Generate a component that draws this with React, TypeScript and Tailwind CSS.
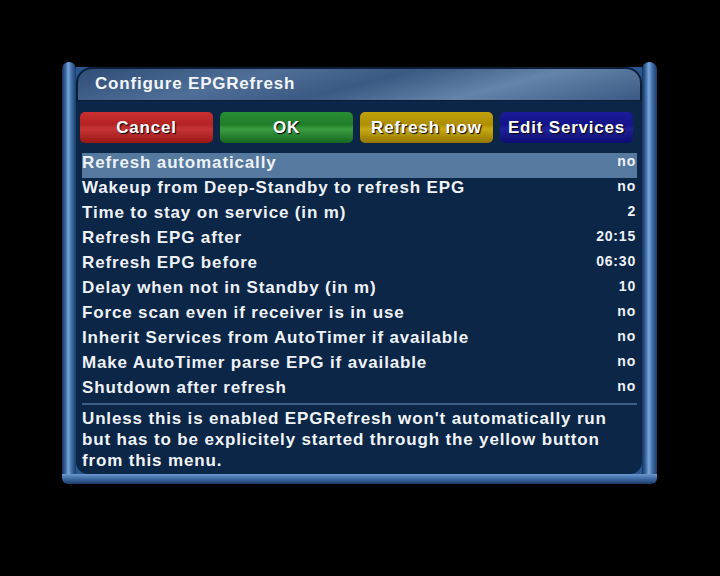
import React from 'react';

const settings = [
  { label: 'Refresh automatically', value: 'no' },
  { label: 'Wakeup from Deep-Standby to refresh EPG', value: 'no' },
  { label: 'Time to stay on service (in m)', value: '2' },
  { label: 'Refresh EPG after', value: '20:15' },
  { label: 'Refresh EPG before', value: '06:30' },
  { label: 'Delay when not in Standby (in m)', value: '10' },
  { label: 'Force scan even if receiver is in use', value: 'no' },
  { label: 'Inherit Services from AutoTimer if available', value: 'no' },
  { label: 'Make AutoTimer parse EPG if available', value: 'no' },
  { label: 'Shutdown after refresh', value: 'no' },
];

const buttons = [
  { label: 'Cancel', cls: 'bg-[linear-gradient(180deg,#c83030_0%,#b52222_40%,#c53535_55%,#9a1414_100%)]' },
  { label: 'OK', cls: 'bg-[linear-gradient(180deg,#2a8f34_0%,#1f7d28_40%,#3a9c40_55%,#15661d_100%)]' },
  { label: 'Refresh now', cls: 'bg-[linear-gradient(180deg,#c2a20a_0%,#ad8e00_40%,#c8a912_55%,#927500_100%)]' },
  { label: 'Edit Services', cls: 'bg-[linear-gradient(180deg,#1c1c98_0%,#13138a_40%,#20209a_55%,#0c0c70_100%)]' },
];

const pillar = 'bg-[linear-gradient(90deg,#16325a_0%,#3a68a2_25%,#7aa6da_45%,#3d6ca6_70%,#1a3b68_100%)]';

const App: React.FC = () => {
  return (
    <div className="w-[720px] h-[576px] bg-black pt-[62px] pl-[62px] font-['Liberation_Sans',Arial,sans-serif] font-bold">
      <div className="w-[595px] h-[422px] flex flex-col">
        <div className="flex flex-1 min-h-0">
          {/* left pillar */}
          <div className={`w-[14px] rounded-t-[8px] ${pillar}`} />

          <div className="flex-1 flex flex-col bg-[#2b5790]">
            <div className="h-[5px] bg-black" />
            {/* Title bar */}
            <div className="h-[34px] rounded-t-[16px] border-2 border-b border-[#0c1d38] bg-[linear-gradient(165deg,#2f4d76_0%,#4f6f98_30%,#3a5983_50%,#6584aa_72%,#3a5a85_100%)] flex items-center pl-[17px]">
              <span className="text-[17px] tracking-[0.8px] text-[#f2f5f9] -mt-[2px]">Configure EPGRefresh</span>
            </div>

            {/* Content */}
            <div className="flex-1 bg-[#0c2647] rounded-b-[12px] flex flex-col">
              <div className="flex gap-[7px] pl-[4px] pt-[11px]">
                {buttons.map((b) => (
                  <div
                    key={b.label}
                    className={`w-[133px] h-[31px] rounded-[5px] flex items-center justify-center text-[17px] tracking-[0.8px] text-white [text-shadow:1px_1px_1px_#000] ${b.cls}`}
                  >
                    {b.label}
                  </div>
                ))}
              </div>

              <div className="ml-[6px] w-[555px] mt-[10px]">
                {settings.map((s, i) => (
                  <div
                    key={s.label}
                    className={`h-[25px] flex items-center justify-between text-[#eef2f7] ${i === 0 ? 'bg-[#56799f]' : ''}`}
                  >
                    <span className="text-[17px] tracking-[0.85px] leading-none -mt-[6px]">{s.label}</span>
                    <span className="text-[14px] tracking-[0.8px] pr-[1px] leading-none -mt-[9px]">{s.value}</span>
                  </div>
                ))}
                <div className="h-[2px] bg-[#3f5f86]" />
                <p className="pt-[3px] text-[17px] leading-[21px] tracking-[0.85px] text-[#f0f4f8]">
                  Unless this is enabled EPGRefresh won't automatically run but has to be explicitely started through the yellow button from this menu.
                </p>
              </div>
            </div>
          </div>

          {/* right pillar */}
          <div className={`w-[15px] rounded-t-[8px] ${pillar}`} />
        </div>
        <div className="h-[10px] rounded-b-[6px] bg-[linear-gradient(180deg,#6a98cf_0%,#3b68a0_50%,#1b3a66_100%)]" />
      </div>
    </div>
  );
};

export default App;
